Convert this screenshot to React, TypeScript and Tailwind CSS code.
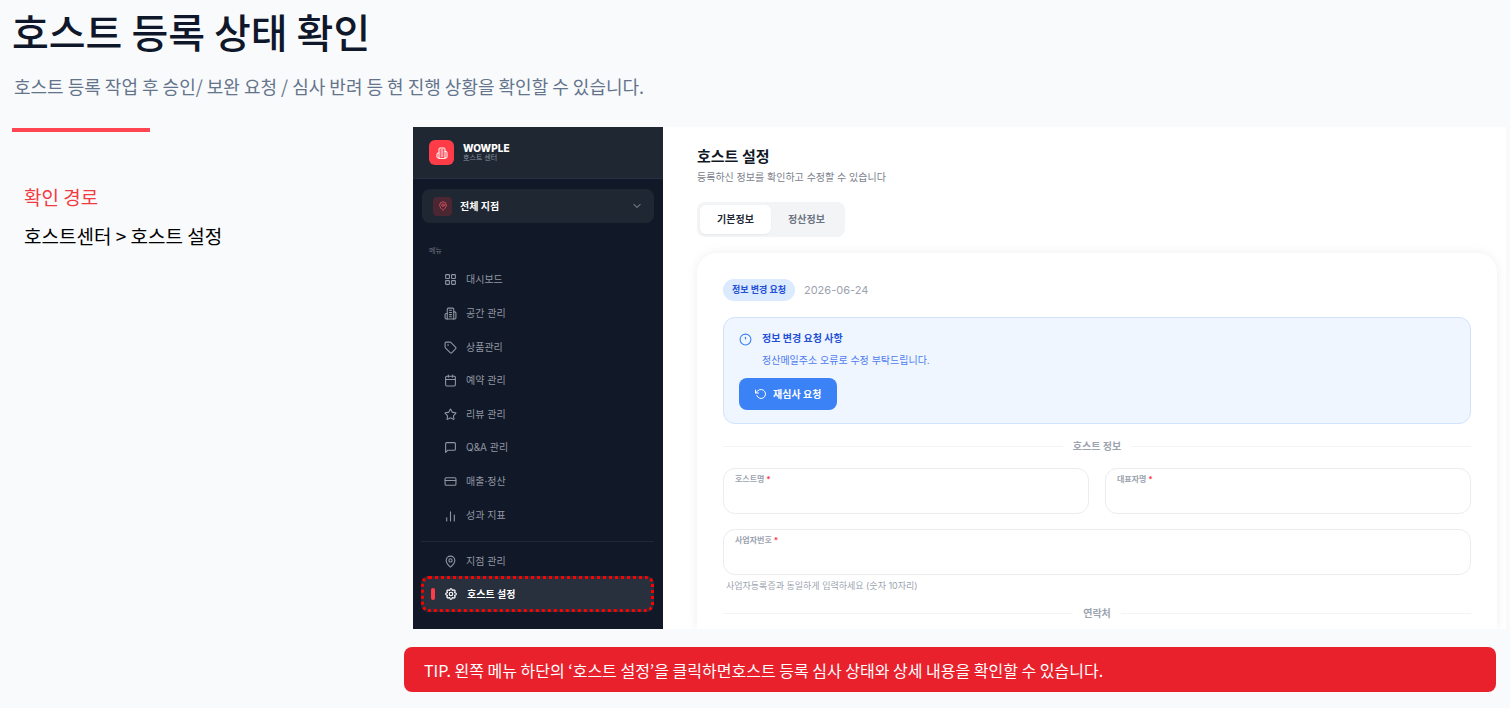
import { useState } from "react";
import {
  Calendar,
  ChevronDown,
  CreditCard,
  LayoutGrid,
  MapPin,
  Star,
  Tag,
} from "lucide-react";
import { FiRotateCcw } from "react-icons/fi";
import { HiOutlineCog8Tooth } from "react-icons/hi2";

type IconProps = { className?: string; strokeWidth?: number };

const svgProps = {
  viewBox: "0 0 24 24",
  fill: "none",
  stroke: "currentColor",
  strokeLinecap: "round" as const,
  strokeLinejoin: "round" as const,
  "aria-hidden": true,
};

const BuildingIcon = ({ className, strokeWidth = 2 }: IconProps) => (
  <svg {...svgProps} className={className} strokeWidth={strokeWidth}>
    <path d="M6 22V4a2 2 0 0 1 2-2h8a2 2 0 0 1 2 2v18Z" />
    <path d="M6 12H4a2 2 0 0 0-2 2v6a2 2 0 0 0 2 2h2" />
    <path d="M18 9h2a2 2 0 0 1 2 2v9a2 2 0 0 1-2 2h-2" />
    <path d="M10 6h4M10 10h4M10 14h4M10 18h4" />
  </svg>
);

const MessageIcon = ({ className, strokeWidth = 2 }: IconProps) => (
  <svg {...svgProps} className={className} strokeWidth={strokeWidth}>
    <path d="M21 15a2 2 0 0 1-2 2H7l-4 4V5a2 2 0 0 1 2-2h14a2 2 0 0 1 2 2z" />
  </svg>
);

const BarsIcon = ({ className, strokeWidth = 2 }: IconProps) => (
  <svg {...svgProps} className={className} strokeWidth={strokeWidth}>
    <path d="M19 22V11M12 22V5M5 22v-6" />
  </svg>
);

const NoticeIcon = ({ className, strokeWidth = 2 }: IconProps) => (
  <svg {...svgProps} className={className} strokeWidth={strokeWidth}>
    <circle cx="12" cy="12" r="10" />
    <path d="M12 8v3" />
  </svg>
);

const menu = [
  { label: "대시보드", icon: LayoutGrid },
  { label: "공간 관리", icon: BuildingIcon },
  { label: "상품관리", icon: Tag },
  { label: "예약 관리", icon: Calendar },
  { label: "리뷰 관리", icon: Star },
  { label: "Q&A 관리", icon: MessageIcon },
  { label: "매출·정산", icon: CreditCard },
  { label: "성과 지표", icon: BarsIcon },
];

const tabs = ["기본정보", "정산정보"];

function Sidebar() {
  return (
    <aside className="w-[250px] shrink-0 bg-[#111827] text-[10px] text-[#9097a3]">
      <div className="flex h-[52px] items-center gap-[9px] border-b border-[#273040] bg-[#1f2733] pl-4">
        <span className="flex size-[25px] items-center justify-center rounded-md bg-[#fe3c48] text-white">
          <BuildingIcon className="size-3" />
        </span>
        <div>
          <p className="text-[10px] leading-[10px] font-extrabold text-white">WOWPLE</p>
          <p className="text-[7px] leading-[10px] text-[#8b93a1]">호스트 센터</p>
        </div>
      </div>

      <div className="px-[9px] pt-2.5">
        <button className="flex h-[34px] w-full items-center gap-2 rounded-lg bg-[#1f2733] px-[11px] font-bold text-white">
          <span className="flex size-[19px] items-center justify-center rounded bg-[#4b2734] text-[#e2545e]">
            <MapPin className="size-2.5" />
          </span>
          전체 지점
          <ChevronDown className="ml-auto size-3 text-[#9ca3af]" />
        </button>
        <p className="mt-5 pl-[7px] text-[7px] leading-4 text-[#6b7280]">메뉴</p>
      </div>

      <nav className="pt-1 pr-[9px] pl-2">
        <div className="flex h-[269px] flex-col">
          {menu.map(({ label, icon: Icon }) => (
            <a key={label} href="#" className="flex flex-1 items-center gap-[9px] pl-[23px]">
              <Icon className="size-[13px]" strokeWidth={2} />
              {label}
            </a>
          ))}
        </div>
        <div className="mt-[9px] border-t border-[#202938] pt-1">
          <a href="#" className="flex h-[30px] items-center gap-[9px] pl-[23px]">
            <MapPin className="size-[13px]" />
            지점 관리
          </a>
          <a
            href="#"
            className="flex h-9 items-center gap-[9px] rounded-lg border-3 border-dotted border-[#ff0000] bg-[#29303d] pl-[7px] font-bold text-white"
          >
            <span className="h-3 w-1 rounded-full bg-[#fe3c48]" />
            <HiOutlineCog8Tooth className="size-[14px]" strokeWidth={2} />
            호스트 설정
          </a>
        </div>
      </nav>
    </aside>
  );
}

function Divider({ title }: { title: string }) {
  return (
    <div className="flex items-center gap-2.5">
      <span className="h-px flex-1 bg-[#f3f4f6]" />
      <h3 className="text-[10px] leading-4 font-bold text-[#9ca3af]">{title}</h3>
      <span className="h-px flex-1 bg-[#f3f4f6]" />
    </div>
  );
}

function Field({ id, label }: { id: string; label: string }) {
  return (
    <div className="flex h-[46px] flex-col rounded-xl border border-[#ebecef] px-[11px] pt-1">
      <label htmlFor={id} className="text-[8px] leading-3 font-bold text-[#9ca3af]">
        {label} <span className="text-[#fe3c48]">*</span>
      </label>
      <input id={id} type="text" className="min-h-0 w-full flex-1 bg-transparent text-[10px] text-[#111827] outline-none" />
    </div>
  );
}

function HostSettings() {
  const [tab, setTab] = useState(tabs[0]);

  return (
    <section className="min-w-0 flex-1 overflow-hidden bg-white pt-5 pr-[9px] pl-[34px]">
      <h2 className="text-[15px] leading-5 font-bold text-[#111827]">호스트 설정</h2>
      <p className="mt-0.5 text-[10px] leading-4 text-[#7b818c]">등록하신 정보를 확인하고 수정할 수 있습니다</p>

      <div className="mt-[17px] flex h-[35px] w-[148px] rounded-lg bg-[#f3f4f6] p-[3px]">
        {tabs.map((t) => (
          <button
            key={t}
            onClick={() => setTab(t)}
            className={`flex-1 rounded-md text-[10px] font-bold ${
              t === tab ? "bg-white text-[#1f2937] shadow-xs" : "text-[#6b7280]"
            }`}
          >
            {t}
          </button>
        ))}
      </div>

      <div className="mt-4 rounded-t-[20px] px-[26px] pt-[26px] pb-2 shadow-[0_0_12px_rgba(0,0,0,0.07)]">
        <div className="flex items-center gap-[9px]">
          <span className="flex h-[22px] items-center rounded-full bg-[#dbeafe] px-[9px] text-[9px] font-bold text-[#2450d8]">
            정보 변경 요청
          </span>
          <time className="text-[11px] text-[#9ca3af]">2026-06-24</time>
        </div>

        <div className="mt-4 rounded-xl border border-[#d0e3fd] bg-[#eff6ff] px-[15px] pt-3 pb-[13px]">
          <div className="flex gap-2.5">
            <NoticeIcon className="mt-[3px] size-[13px] text-[#3b82f6]" />
            <div>
              <h3 className="text-[10px] leading-4 font-bold text-[#2450d8]">정보 변경 요청 사항</h3>
              <p className="mt-1.5 text-[10px] leading-4 text-[#4f7df0]">정산메일주소 오류로 수정 부탁드립니다.</p>
            </div>
          </div>
          <button className="mt-2.5 flex h-8 items-center gap-1.5 rounded-lg bg-[#3b82f6] px-4 text-[10px] font-bold text-white">
            <FiRotateCcw className="size-3" />
            재심사 요청
          </button>
        </div>

        <div className="mt-3.5">
          <Divider title="호스트 정보" />
        </div>
        <div className="mt-3.5 grid grid-cols-2 gap-4">
          <Field id="host-name" label="호스트명" />
          <Field id="owner-name" label="대표자명" />
        </div>
        <div className="mt-[15px]">
          <Field id="business-number" label="사업자번호" />
          <p className="mt-[3px] pl-[3px] text-[9px] leading-4 text-[#9ca3af]">
            사업자등록증과 동일하게 입력하세요 (숫자 10자리)
          </p>
        </div>
        <div className="mt-[11px]">
          <Divider title="연락처" />
        </div>
      </div>
    </section>
  );
}

export default function App() {
  return (
    <main className="min-h-screen bg-[#f9fafc] pt-1 pr-1 pb-4 pl-3 font-['Noto_Sans_CJK_KR',sans-serif]">
      <header className="h-[123px]">
        <h1 className="text-[40px] leading-[54px] font-medium text-[#0f172a]">호스트 등록 상태 확인</h1>
        <p className="mt-3.5 pl-0.5 text-[18px] leading-7 text-[#64748b]">
          호스트 등록 작업 후 승인/ 보완 요청 / 심사 반려 등 현 진행 상황을 확인할 수 있습니다.
        </p>
      </header>

      <div className="flex">
        <div className="w-[392px] shrink-0">
          <div className="mt-px h-1 w-[138px] bg-[#ff4552]" />
          <div className="pt-[49px] pl-3 text-[19px]">
            <h2 className="leading-8 text-[#f23b40]">확인 경로</h2>
            <p className="mt-[7px] leading-8 text-black">호스트센터 &gt; 호스트 설정</p>
          </div>
        </div>

        <div className="min-w-0 flex-1">
          <div className="ml-[9px] flex font-['Inter','Noto_Sans_CJK_KR',sans-serif]">
            <Sidebar />
            <HostSettings />
          </div>
          <p className="mt-[18px] mr-[10px] flex h-[45px] items-center rounded-lg bg-[#e9212d] px-5 text-[16px] text-white">
            TIP. 왼쪽 메뉴 하단의 ‘호스트 설정’을 클릭하면호스트 등록 심사 상태와 상세 내용을 확인할 수 있습니다.
          </p>
        </div>
      </div>
    </main>
  );
}
